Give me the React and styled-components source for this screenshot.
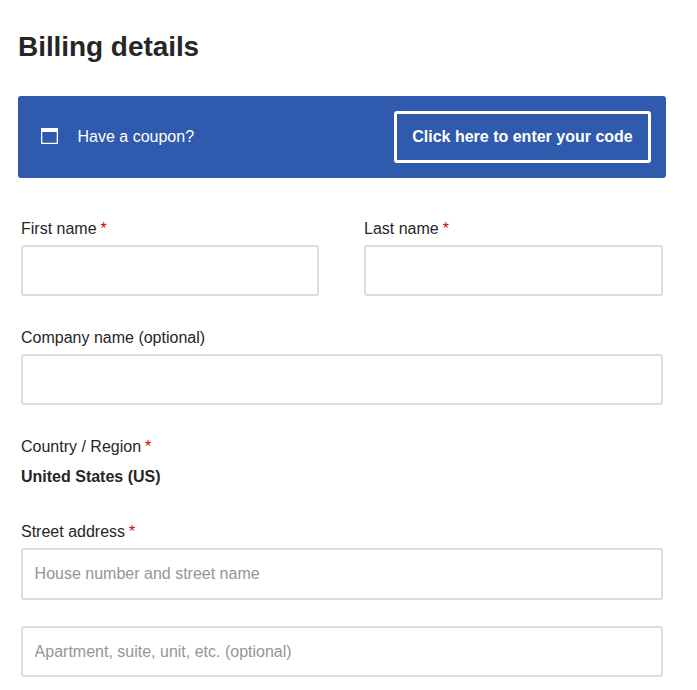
import React from 'react';
import styled, { createGlobalStyle } from 'styled-components';

const GlobalStyle = createGlobalStyle`
  *, *::before, *::after { box-sizing: border-box; }
  body {
    margin: 0;
    background: #fff;
    color: #272626;
    font: 16px/32px "Liberation Sans", Arial, sans-serif;
  }
`;

const Page = styled.main`
  width: 697px;
  height: 690px;
  padding: 26px 31px 0 18px;
  overflow: hidden;
`;

const Title = styled.h1`
  margin: 0 0 28px;
  font-size: 28px;
  line-height: 42px;
  font-weight: 700;
  letter-spacing: -0.06px;
`;

const Coupon = styled.section`
  display: flex;
  align-items: center;
  height: 82px;
  padding: 0 15px 0 23px;
  border-radius: 3px;
  background: #2f5aae;
  color: #fff;
  line-height: 30px;
`;

const CouponIcon = styled.svg`
  display: block;
  width: 17px;
  height: 16px;
  margin: 0 19.5px 2px 0;
`;

const CouponButton = styled.button`
  width: 257px;
  height: 52px;
  margin-left: auto;
  padding: 0;
  border: 3px solid #fff;
  border-radius: 3px;
  background: transparent;
  color: #fff;
  font: inherit;
  font-weight: 700;
  line-height: 20px;
`;

const Form = styled.form`
  display: flex;
  flex-direction: column;
  padding: 35px 3px 0;
`;

const NameRow = styled.div`
  display: grid;
  grid-template-columns: 298px 299px;
  justify-content: space-between;
`;

const Field = styled.div`
  display: flex;
  flex-direction: column;
  margin-bottom: ${({ $gap }) => $gap || 26}px;
`;

const Label = styled.label`
  height: ${({ $compact }) => ($compact ? 30 : 32)}px;
`;

const Required = styled.span`
  margin-left: -0.5px;
  color: #d40000;
`;

const Input = styled.input`
  width: 100%;
  height: ${({ $tall }) => ($tall ? 52 : 51)}px;
  padding: 0 11.6px;
  border: 2px solid #dcdcdc;
  border-radius: 3px;
  outline: none;
  background: #fff;
  color: inherit;
  font: inherit;
  line-height: 20px;

  &::placeholder {
    color: #959595;
    opacity: 1;
  }
`;

const TextField = ({ id, label, required, placeholder, tall }) => (
  <Field>
    {label && (
      <Label htmlFor={id}>
        {label} {required && <Required>*</Required>}
      </Label>
    )}
    <Input id={id} placeholder={placeholder} $tall={tall} />
  </Field>
);

export default function App() {
  return (
    <Page>
      <GlobalStyle />
      <Title>Billing details</Title>
      <Coupon>
        <CouponIcon viewBox="0 0 17 16" aria-hidden="true">
          <path fill="#fff" fillRule="evenodd" d="M0 0H17V16H0ZM1.3 4V14.8H15.7V4Z" />
        </CouponIcon>
        <span>Have a coupon?</span>
        <CouponButton type="button">Click here to enter your code</CouponButton>
      </Coupon>
      <Form>
        <NameRow>
          <TextField id="first" label="First name" required />
          <TextField id="last" label="Last name" required />
        </NameRow>
        <TextField id="company" label="Company name (optional)" />
        <Field $gap={23}>
          <Label as="span" $compact>
            Country / Region <Required>*</Required>
          </Label>
          <strong>United States (US)</strong>
        </Field>
        <TextField id="street" label="Street address" required placeholder="House number and street name" tall />
        <TextField id="unit" placeholder="Apartment, suite, unit, etc. (optional)" />
      </Form>
    </Page>
  );
}
